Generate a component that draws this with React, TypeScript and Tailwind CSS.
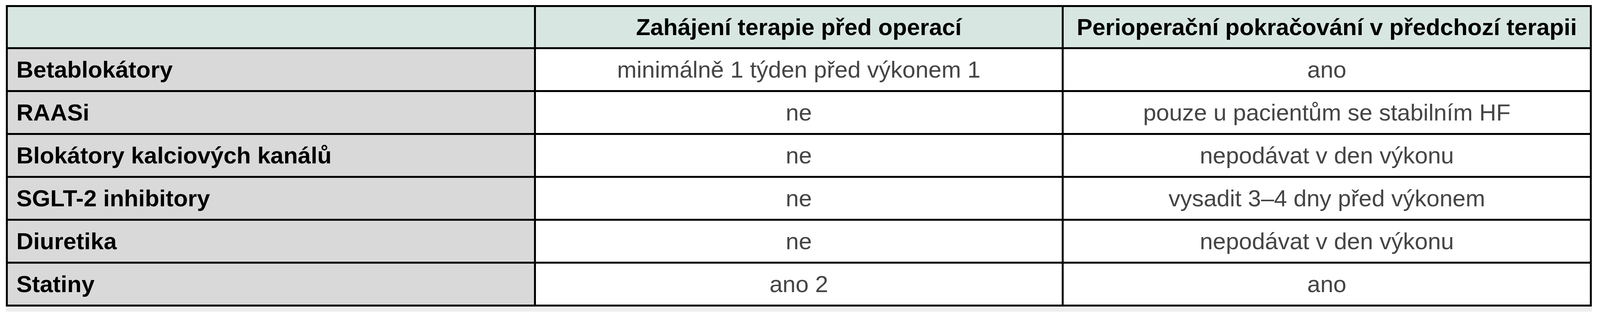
const rows = [
  { name: 'Betablokátory', start: 'minimálně 1 týden před výkonem 1', cont: 'ano' },
  { name: 'RAASi', start: 'ne', cont: 'pouze u pacientům se stabilním HF' },
  { name: 'Blokátory kalciových kanálů', start: 'ne', cont: 'nepodávat v den výkonu' },
  { name: 'SGLT-2 inhibitory', start: 'ne', cont: 'vysadit 3–4 dny před výkonem' },
  { name: 'Diuretika', start: 'ne', cont: 'nepodávat v den výkonu' },
  { name: 'Statiny', start: 'ano 2', cont: 'ano' },
]

export default function App() {
  return (
    <div className="min-h-[800px] bg-white pl-[15px] pt-[13px] font-['Liberation_Sans',Arial,sans-serif] text-[60px] leading-none">
      <div className="w-[4060px]">
        <div className="grid grid-cols-3 gap-x-[5px] gap-y-[5px] border-x-[5px] border-y-[5px] border-black bg-black">
          <div className="h-[103px] bg-[#d7e6e1]" />
          <div className="flex h-[103px] items-center justify-center bg-[#d7e6e1] font-bold text-black">
            Zahájení terapie před operací
          </div>
          <div className="flex h-[103px] items-center justify-center bg-[#d7e6e1] font-bold text-black">
            Perioperační pokračování v předchozí terapii
          </div>
          {rows.map((row) => (
            <Row key={row.name} {...row} />
          ))}
        </div>
        <div className="h-[13px] bg-[#eeeeee]" />
      </div>
    </div>
  )
}

function Row({ name, start, cont }: { name: string; start: string; cont: string }) {
  return (
    <>
      <div className="flex h-[105px] items-center bg-[#d9d9d9] pl-[22px] font-bold text-black">{name}</div>
      <div className="flex h-[105px] items-center justify-center bg-white text-[#454545]">{start}</div>
      <div className="flex h-[105px] items-center justify-center bg-white text-[#454545]">{cont}</div>
    </>
  )
}
